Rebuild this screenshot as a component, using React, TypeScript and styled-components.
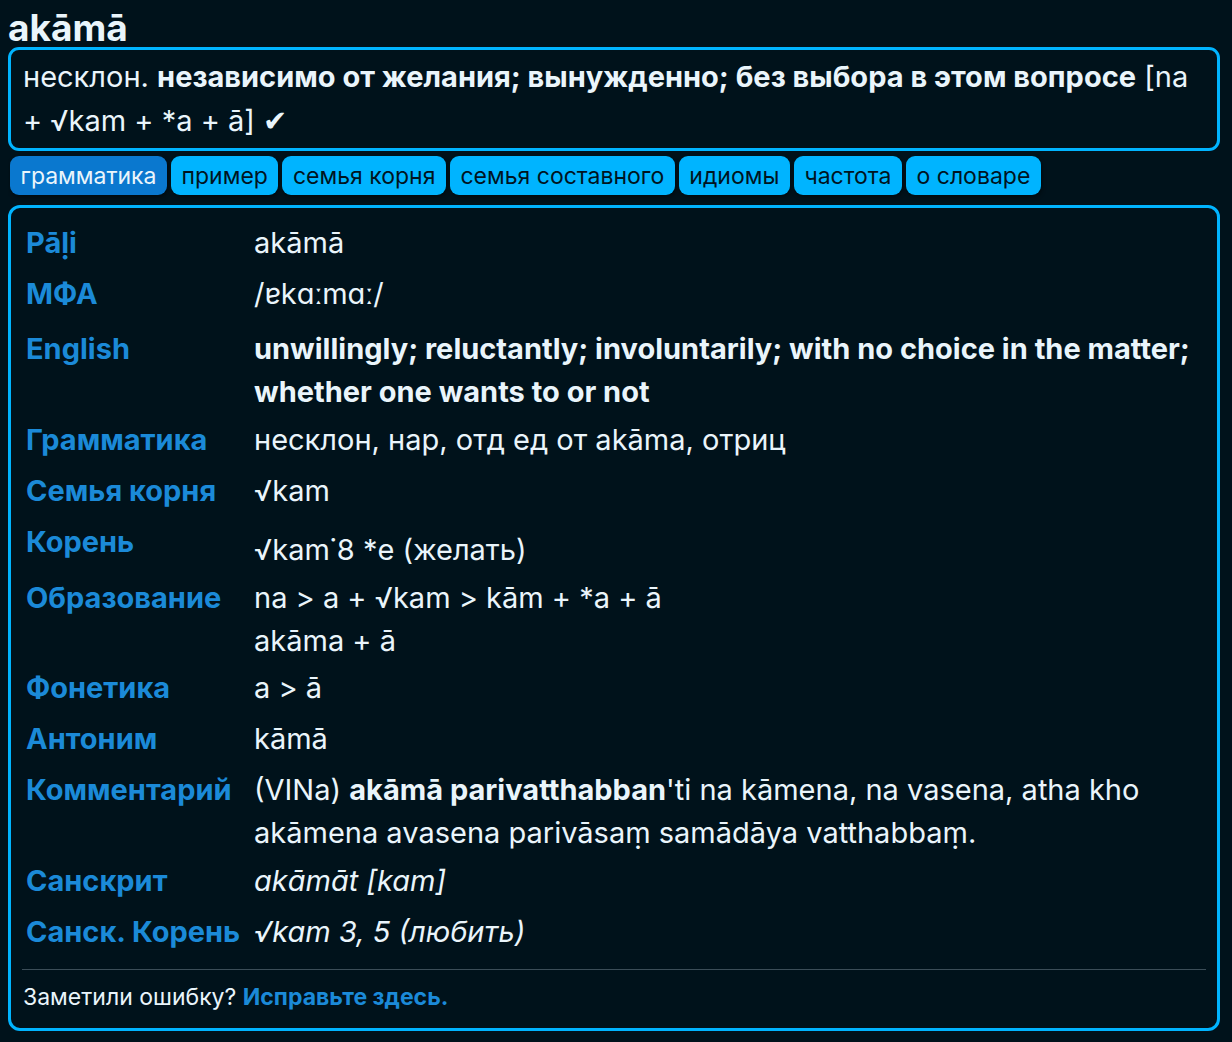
import React from 'react';
import styled, { createGlobalStyle } from 'styled-components';

const GlobalStyle = createGlobalStyle`
  html {
    overflow-y: scroll;
    background: #00121b;
  }
  html::-webkit-scrollbar {
    width: 3px;
    background: #2b3136;
  }
  body {
    margin: 8px 12px 8px 8px;
    background: #00121b;
    color: #eaf5fb;
    font-family: Inter, Roboto, "Noto Sans", sans-serif;
  }
`;

const Title = styled.h1`
  margin: 0;
  font-size: 37px;
  line-height: 39px;
  font-weight: 700;
`;

const Summary = styled.div`
  border: 3px solid #00b4ff;
  border-radius: 11px;
  padding: 5px 12px;
  font-size: 29px;
  line-height: 44px;
`;

const Tabs = styled.div`
  display: flex;
  gap: 4px;
  margin: 5px 0 0 2px;
`;

const Tab = styled.button<{ $active?: boolean }>`
  height: 39px;
  padding: 0 10.5px;
  border: none;
  border-radius: 9px;
  font-family: Inter, Roboto, sans-serif;
  font-size: 23px;
  background: ${(p) => (p.$active ? '#0a78cf' : '#00b4ff')};
  color: ${(p) => (p.$active ? '#eaf5fb' : '#00141f')};
  box-shadow: 1px 2px 4px rgba(0, 0, 0, 0.45);
  cursor: pointer;
`;

const Panel = styled.div`
  margin-top: 10px;
  border: 3px solid #00b4ff;
  border-radius: 12px;
  padding: 9px 15px 16px;
`;

const Row = styled.div<{ $after?: number }>`
  display: grid;
  grid-template-columns: 228px 1fr;
  padding: 4px 0 ${(p) => 4 + (p.$after ?? 0)}px;
  font-size: 29px;
  line-height: 43px;
`;

const Label = styled.div`
  color: #1b8ad8;
  font-weight: 700;
  white-space: nowrap;
`;

const Value = styled.div<{ $shift?: number }>`
  padding-top: ${(p) => p.$shift ?? 0}px;
`;

const Rule = styled.hr`
  margin: 12px -4px 0;
  border: none;
  border-top: 1px solid #3b4d58;
`;

const Footer = styled.div`
  margin-left: -3px;
  padding-top: 12px;
  font-size: 23px;
  line-height: 30px;
`;

const FixLink = styled.a`
  color: #1b8ad8;
  font-weight: 700;
  text-decoration: none;
`;

const tabs = ['грамматика', 'пример', 'семья корня', 'семья составного', 'идиомы', 'частота', 'о словаре'];

export default function App() {
  return (
    <>
      <GlobalStyle />
      <Title>akāmā</Title>
      <Summary>
        несклон. <b>независимо от желания; вынужденно; без выбора в этом вопросе</b> [na + √kam + *a + ā] ✔
      </Summary>
      <Tabs>
        {tabs.map((t, i) => (
          <Tab key={t} $active={i === 0}>
            {t}
          </Tab>
        ))}
      </Tabs>
      <Panel>
        <Row>
          <Label>Pāḷi</Label>
          <Value>akāmā</Value>
        </Row>
        <Row $after={4}>
          <Label>МФА</Label>
          <Value>/ɐkɑːmɑː/</Value>
        </Row>
        <Row $after={-3}>
          <Label>English</Label>
          <Value>
            <b>unwillingly; reluctantly; involuntarily; with no choice in the matter; whether one wants to or not</b>
          </Value>
        </Row>
        <Row>
          <Label>Грамматика</Label>
          <Value>несклон, нар, отд ед от akāma, отриц</Value>
        </Row>
        <Row>
          <Label>Семья корня</Label>
          <Value>√kam</Value>
        </Row>
        <Row $after={-3}>
          <Label>Корень</Label>
          <Value $shift={8}>√kam˙8 *e (желать)</Value>
        </Row>
        <Row $after={-4}>
          <Label>Образование</Label>
          <Value>
            na &gt; a + √kam &gt; kām + *a + ā
            <br />
            akāma + ā
          </Value>
        </Row>
        <Row>
          <Label>Фонетика</Label>
          <Value>a &gt; ā</Value>
        </Row>
        <Row>
          <Label>Антоним</Label>
          <Value>kāmā</Value>
        </Row>
        <Row $after={-3}>
          <Label>Комментарий</Label>
          <Value>
            (VINa) <b>akāmā parivatthabban</b>'ti na kāmena, na vasena, atha kho akāmena avasena parivāsaṃ samādāya vatthabbaṃ.
          </Value>
        </Row>
        <Row>
          <Label>Санскрит</Label>
          <Value>
            <i>akāmāt [kam]</i>
          </Value>
        </Row>
        <Row>
          <Label>Санск. Корень</Label>
          <Value>
            <i>√kam 3, 5 (любить)</i>
          </Value>
        </Row>
        <Rule />
        <Footer>
          Заметили ошибку? <FixLink href="#">Исправьте здесь.</FixLink>
        </Footer>
      </Panel>
    </>
  );
}
